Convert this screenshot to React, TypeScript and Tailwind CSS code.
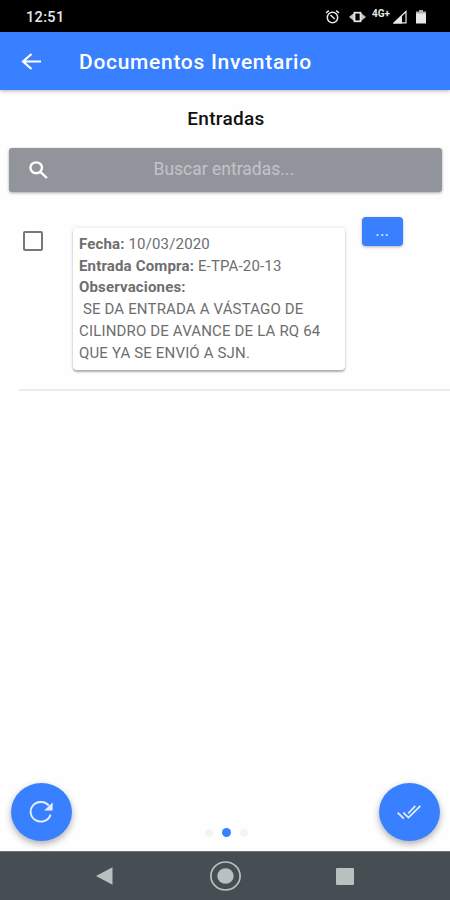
import type { ReactNode } from "react";

const lines = [
  { label: "Fecha:", value: "10/03/2020" },
  { label: "Entrada Compra:", value: "E-TPA-20-13" },
  { label: "Observaciones:", value: "" },
];

const notes = [
  "\u00a0SE DA ENTRADA A VÁSTAGO DE",
  "CILINDRO DE AVANCE DE LA RQ 64",
  "QUE YA SE ENVIÓ A SJN.",
];

function StatusBar() {
  return (
    <div className="flex h-8 shrink-0 items-center bg-black pl-[26px] pr-[24px] pt-px text-[#e8e8e8]">
      <span className="mt-[2px] text-[14.5px] font-medium leading-4 tracking-[0.35px]">12:51</span>
      <div className="ml-auto flex items-center">
        {/* Alarm */}
        <svg className="h-4 w-[15px]" viewBox="0 0 15 16" fill="none" stroke="currentColor" strokeWidth="1.5">
          <circle cx="7.5" cy="8.5" r="5.2" />
          <path d="M1 4l2.8-2.4M14 4l-2.8-2.4M5.5 6l4.2 4" />
        </svg>
        {/* Vibrate */}
        <svg className="ml-[9px] h-4 w-[17px]" viewBox="0 0 17 16" fill="none" stroke="currentColor">
          <rect x="5.5" y="3.7" width="6" height="8.6" strokeWidth="1.7" />
          <path d="M0 8l5-4v8zM17 8l-5-4v8z" fill="currentColor" stroke="none" opacity="0.85" />
        </svg>
        <span className="ml-[6px] mb-[5px] w-[19px] whitespace-nowrap text-[10px] font-bold leading-3">4G+</span>
        {/* Signal */}
        <svg className="ml-[2px] h-4 w-[14px]" viewBox="0 0 14 16">
          <path d="M1.2 13.8H13V2.5z" fill="none" stroke="currentColor" strokeWidth="1.2" />
          <path d="M0 14.5h9V6z" fill="currentColor" />
        </svg>
        {/* Battery */}
        <svg className="ml-[9px] h-4 w-[10px]" viewBox="0 0 10 16" fill="currentColor">
          <path d="M3 1h4v1.5h3v3H0v-3h3z" opacity="0.75" />
          <path d="M0 4.5h10v10H0z" />
        </svg>
      </div>
    </div>
  );
}

function Header() {
  return (
    <header className="relative flex h-[58px] shrink-0 items-center bg-[#3880ff] pl-[21px] pt-px text-white shadow-[0_1px_4px_rgba(0,0,0,0.3)]">
      <svg className="h-[17px] w-5" viewBox="0 0 20 17" fill="none" stroke="currentColor" strokeWidth="2.2">
        <path d="M20 8.5H2M10.5 1L2 8.5l8.5 7.5" />
      </svg>
      <h1 className="ml-[38px] text-[21px] font-medium leading-6 tracking-[0.7px]">Documentos Inventario</h1>
    </header>
  );
}

function SearchBar() {
  return (
    <div className="mx-auto mt-[17px] flex h-11 w-[433px] items-center rounded-[3px] bg-[#92949c] shadow-[0_1px_3px_rgba(0,0,0,0.35)]">
      <svg className="ml-5 h-[18px] w-[19px]" viewBox="0 0 19 18" fill="none" stroke="white" strokeWidth="2.4">
        <ellipse cx="7.2" cy="6.8" rx="5.8" ry="5.4" />
        <path d="M11.3 10.8l6.6 6.2" />
      </svg>
      <span className="-mt-[3px] ml-[106px] text-[17.5px] leading-5 text-[#c2c3c9]">Buscar entradas...</span>
    </div>
  );
}

function EntryRow() {
  return (
    <div className="ml-[19px] mt-6 flex h-[175px] items-start border-b-2 border-[#ececec]">
      <button aria-label="Seleccionar" className="ml-1 mt-[15px] h-5 w-5 rounded-[2px] border-2 border-[#777777]" />
      <div className="ml-[30px] mt-3 h-[142px] w-[272px] rounded-[4px] bg-white pl-1.5 pt-1.5 text-[15px] leading-[21.7px] tracking-[0.16px] text-[#6e6e6e] shadow-[0_2px_2px_rgba(0,0,0,0.28),0_0_4px_rgba(0,0,0,0.12)]">
        {lines.map((line) => (
          <p key={line.label}>
            <b className="font-bold">{line.label}</b> {line.value}
          </p>
        ))}
        {notes.map((note) => (
          <p key={note} className="whitespace-nowrap">
            {note}
          </p>
        ))}
      </div>
      <button className="ml-[17px] mt-px h-[29px] w-[41px] rounded-[4px] bg-[#3880ff] text-[14px] font-medium leading-[29px] tracking-[0.8px] text-[#d5e4ff] shadow-[0_1px_3px_rgba(0,0,0,0.3)]">
        ...
      </button>
    </div>
  );
}

function Fab({ label, children }: { label: string; children: ReactNode }) {
  return (
    <button
      aria-label={label}
      className="flex h-[58px] w-[61px] items-center justify-center rounded-[50%] bg-[#3880ff] pr-[2px] text-[#e6efff] shadow-[0_3px_7px_rgba(0,0,0,0.32)]"
    >
      {children}
    </button>
  );
}

function NavBar() {
  return (
    <nav className="flex h-[49px] shrink-0 items-center border-t border-[#6c7376] bg-[#464e53]">
      <svg className="ml-24 h-[18px] w-[17px]" viewBox="0 0 17 18" fill="#b9c0c0">
        <path d="M0 9L16.5.3v17.4z" />
      </svg>
      <svg className="ml-[97px] h-[30px] w-[31px]" viewBox="0 0 31 30">
        <ellipse cx="15.5" cy="15" rx="14.6" ry="14" fill="none" stroke="#b9c0c0" strokeWidth="1.7" />
        <ellipse cx="15.5" cy="15" rx="8.2" ry="7.8" fill="#b9c0c0" />
      </svg>
      <div className="ml-[95px] h-[17px] w-[18px] rounded-[1px] bg-[#b9c0c0]" />
    </nav>
  );
}

export default function App() {
  return (
    <div className="flex h-[900px] w-[450px] flex-col overflow-hidden bg-[#fefefe] font-[Roboto,sans-serif]">
      <StatusBar />
      <Header />
      <main className="flex flex-1 flex-col">
        <h2 className="mt-[17px] pl-[2px] text-center text-[19px] font-medium leading-6 tracking-[0.3px] text-[#111111]">Entradas</h2>
        <SearchBar />
        <EntryRow />
        <div className="mb-2.5 mt-auto flex items-end justify-between pl-[11px] pr-2.5">
          <Fab label="Actualizar">
            <svg className="h-[22px] w-6" viewBox="0 0 24 22" fill="none" stroke="currentColor" strokeWidth="1.9">
              <path d="M21.6 13.6a10.2 9.8 0 1 1-1.8-9" />
              <path d="M23.6 1.4v8h-8.4z" fill="currentColor" stroke="none" />
            </svg>
          </Fab>
          <div className="mb-1 flex items-center gap-[9px] pl-[2px]">
            <span className="h-2 w-2 rounded-full bg-[#f4f4f5]" />
            <span className="h-[9px] w-[9px] rounded-full bg-[#3880ff]" />
            <span className="h-2 w-2 rounded-full bg-[#f4f4f5]" />
          </div>
          <Fab label="Confirmar">
            <svg className="h-[15px] w-6" viewBox="0 0 24 15" fill="none" stroke="currentColor" strokeWidth="1.7">
              <path d="M.7 7.6l6.1 6M6.3 7.6l5.2 5L23.4.8M11.2 8.5L18.3.8" />
            </svg>
          </Fab>
        </div>
      </main>
      <NavBar />
    </div>
  );
}
